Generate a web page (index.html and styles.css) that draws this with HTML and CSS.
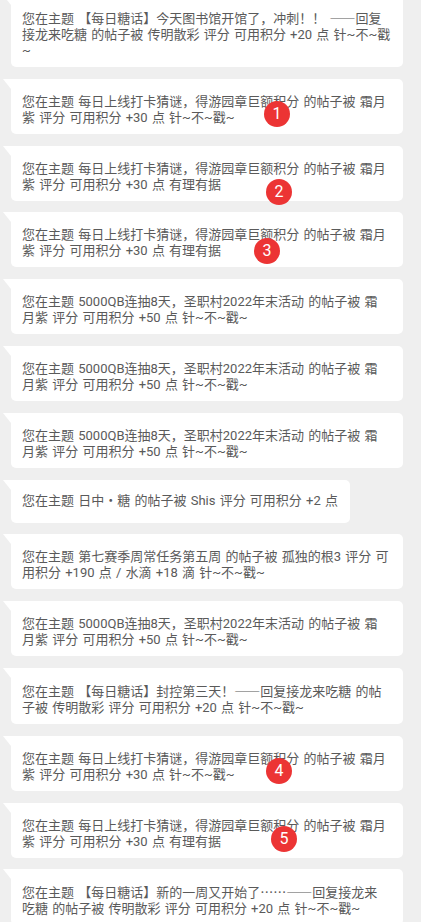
FILE: index.html
```html
<!DOCTYPE html>
<html lang="zh-CN">
<head>
<meta charset="utf-8">
<title>积分提醒</title>
<link rel="stylesheet" href="styles.css">
</head>
<body>
<div class="list">
  <div class="bubble fixed">您在主题 【每日糖话】今天图书馆开馆了，冲刺！！ <span class="cjk">——</span>回复<br>接龙来吃糖 的帖子被 传明散彩 评分 可用积分 +20 点 针~不~戳<br>~</div>
  <div class="bubble">您在主题 每日上线打卡猜谜，得游园章巨额积分 的帖子被 霜月紫 评分 可用积分 +30 点 针~不~戳~<span class="badge b1">1</span></div>
  <div class="bubble">您在主题 每日上线打卡猜谜，得游园章巨额积分 的帖子被 霜月紫 评分 可用积分 +30 点 有理有据<span class="badge b2">2</span></div>
  <div class="bubble">您在主题 每日上线打卡猜谜，得游园章巨额积分 的帖子被 霜月紫 评分 可用积分 +30 点 有理有据<span class="badge b3">3</span></div>
  <div class="bubble">您在主题 5000QB连抽8天，圣职村2022年末活动 的帖子被 霜月紫 评分 可用积分 +50 点 针~不~戳~</div>
  <div class="bubble">您在主题 5000QB连抽8天，圣职村2022年末活动 的帖子被 霜月紫 评分 可用积分 +50 点 针~不~戳~</div>
  <div class="bubble">您在主题 5000QB连抽8天，圣职村2022年末活动 的帖子被 霜月紫 评分 可用积分 +50 点 针~不~戳~</div>
  <div class="bubble single">您在主题 日中・糖 的帖子被 Shis 评分 可用积分 +2 点</div>
  <div class="bubble">您在主题 第七赛季周常任务第五周 的帖子被 孤独的根3 评分 可用积分 +190 点 / 水滴 +18 滴 针~不~戳~</div>
  <div class="bubble">您在主题 5000QB连抽8天，圣职村2022年末活动 的帖子被 霜月紫 评分 可用积分 +50 点 针~不~戳~</div>
  <div class="bubble">您在主题 【每日糖话】封控第三天！<span class="cjk">——</span>回复接龙来吃糖 的帖子被 传明散彩 评分 可用积分 +20 点 针~不~戳~</div>
  <div class="bubble">您在主题 每日上线打卡猜谜，得游园章巨额积分 的帖子被 霜月紫 评分 可用积分 +30 点 针~不~戳~<span class="badge b4">4</span></div>
  <div class="bubble">您在主题 每日上线打卡猜谜，得游园章巨额积分 的帖子被 霜月紫 评分 可用积分 +30 点 有理有据<span class="badge b5">5</span></div>
  <div class="bubble fixed">您在主题 【每日糖话】新的一周又开始了<span class="cjk">……——</span>回复接龙来<br>吃糖 的帖子被 传明散彩 评分 可用积分 +20 点 针~不~戳~</div>
</div>
</body>
</html>
```
FILE: styles.css
```css
html, body {
  margin: 0;
  padding: 0;
  background: #efefef;
}
body {
  font-family: Roboto, "Noto Sans CJK SC", sans-serif;
  font-size: 13px;
  color: #5a5a5a;
  overflow: hidden;
}
.list {
  display: flex;
  flex-direction: column;
  align-items: flex-start;
  gap: 11.8px;
  padding: 0 18px 0 11px;
  margin-top: -5px;
}
.bubble {
  position: relative;
  box-sizing: border-box;
  max-width: 100%;
  background: #ffffff;
  border-radius: 0 5px 5px 5px;
  padding: 15px 14px 8px 11px;
  line-height: 16px;
  word-spacing: 1px;
}
.bubble.fixed {
  width: 100%;
  white-space: nowrap;
}
.bubble.single {
  padding-top: 13px;
  padding-bottom: 14px;
  padding-right: 12px;
}
.bubble::before {
  content: "";
  position: absolute;
  left: -8px;
  top: 0;
  width: 0;
  height: 0;
  border-top: 10px solid #ffffff;
  border-left: 8px solid transparent;
}
.cjk {
  font-family: "Noto Sans CJK SC", sans-serif;
}
.badge {
  position: absolute;
  width: 26px;
  height: 26px;
  border-radius: 50%;
  background: #ec3434;
  color: #ffffff;
  font-family: Roboto, sans-serif;
  font-size: 16px;
  line-height: 26px;
  text-align: center;
  word-spacing: 0;
}
.b1 { left: 253px; top: 22px; }
.b2 { left: 255px; top: 33px; }
.b3 { left: 243px; top: 26px; }
.b4 { left: 255px; top: 22px; }
.b5 { left: 260px; top: 23px; }
```
